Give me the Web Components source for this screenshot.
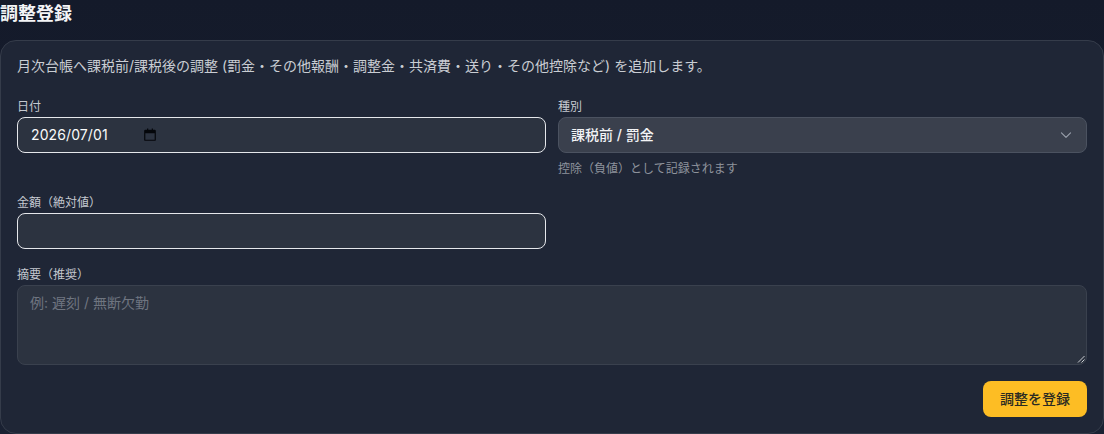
<!DOCTYPE html>
<html lang="ja">
<head>
<meta charset="utf-8">
<style>
html,body{margin:0;padding:0;height:434px;overflow:hidden;background:linear-gradient(180deg,#141a2a 0%,#1a2132 100%);color-scheme:dark}
body{font-family:Inter,"Noto Sans CJK JP",sans-serif;color:#fff}
</style>
</head>
<body>
<adjust-page>
  <span slot="title">調整登録</span>
  <adjust-card>
    <p-text>月次台帳へ課税前/課税後の調整 (罰金・その他報酬・調整金・共済費・送り・その他控除など) を追加します。</p-text>
    <form-grid>
      <form-field label="日付"><text-box focus date>2026/07/01</text-box></form-field>
      <form-field label="種別" hint="控除（負値）として記録されます"><select-box>課税前 / 罰金</select-box></form-field>
      <form-field label="金額（絶対値）"><text-box focus></text-box></form-field>
      <span></span>
      <form-field label="摘要（推奨）" wide><area-box>例: 遅刻 / 無断欠勤</area-box></form-field>
    </form-grid>
    <action-row><gold-button>調整を登録</gold-button></action-row>
  </adjust-card>
</adjust-page>
<script>
function def(name,css,html){
  customElements.define(name,class extends HTMLElement{
    connectedCallback(){
      if(this.shadowRoot)return;
      const r=this.attachShadow({mode:'open'});
      r.innerHTML='<style>'+css+'</style>'+(typeof html==='function'?html(this):html);
    }
  });
}
def('adjust-page',':host{display:flex;flex-direction:column;height:434px;box-sizing:border-box}h2{margin:0;height:40px;box-sizing:border-box;padding-top:1px;font-size:18px;line-height:26px;font-weight:700;color:#f3f4f6}',
 '<h2><slot name="title"></slot></h2><slot></slot>');
def('adjust-card',':host{display:block;flex:1;box-sizing:border-box;padding:15px 16px 16px;background:#1f2636;border:1px solid #353c4a;border-radius:16px}',
 '<slot></slot>');
def('p-text',':host{display:block;font-size:14px;line-height:20px;color:#c9cdd3;margin-bottom:23px}','<slot></slot>');
def('form-grid',':host{display:grid;grid-template-columns:1fr 1fr;column-gap:12px;row-gap:18px}','<slot></slot>');
def('form-field',':host{display:block;min-width:0}:host([wide]){grid-column:1 / -1}label{display:block;font-size:12px;line-height:16px;color:#c4c8cf;margin-bottom:2px}.hint{font-size:12px;line-height:16px;color:#8e939c;margin-top:8px}',
 h=>'<label>'+h.getAttribute('label')+'</label><slot></slot>'+(h.getAttribute('hint')?'<div class="hint">'+h.getAttribute('hint')+'</div>':''));
def('text-box',':host{display:flex;align-items:center;height:36px;box-sizing:border-box;padding:0 13px 1px;border:1px solid #374151;border-radius:8px;background:#2c3340;font-size:14px;letter-spacing:.1px;color:#f9fafb}:host([focus]){border-color:#e5e7eb}svg{margin-left:35px;flex:none}',
 h=>'<slot></slot>'+(h.hasAttribute('date')?'<svg width="14" height="14" viewBox="0 0 24 24" fill="#04060a"><path d="M7 1h2v2h6V1h2v2h3a2 2 0 0 1 2 2v15a2 2 0 0 1-2 2H4a2 2 0 0 1-2-2V5a2 2 0 0 1 2-2h3V1zM4 9v11h16V9H4z"/></svg>':''));
def('select-box',':host{display:flex;align-items:center;justify-content:space-between;height:36px;box-sizing:border-box;padding:0 13px 2px 12px;border:1px solid #4b5260;border-radius:8px;background:#3a404d;font-size:14px;font-weight:500;color:#f3f4f6}svg{margin-top:2px}',
 '<slot></slot><svg width="14" height="14" viewBox="0 0 20 20" fill="none" stroke="#9ca3af" stroke-width="1.5" stroke-linecap="round" stroke-linejoin="round"><path d="M3.5 7l6.5 6.5 6.5-6.5"/></svg>');
def('area-box',':host{display:block;position:relative;height:80px;box-sizing:border-box;padding:7px 12px;border:1px solid #3a414e;border-radius:8px;background:#2c3340;font-size:14px;line-height:20px;color:#6f7580}svg{position:absolute;right:1px;bottom:1px}',
 '<slot></slot><svg width="8" height="8" viewBox="0 0 8 8" stroke="#c9ccd1" stroke-width="1"><path d="M1 7.5L7.5 1M4.5 7.5L7.5 4.5"/></svg>');
def('action-row',':host{display:flex;justify-content:flex-end;margin-top:16px}','<slot></slot>');
def('gold-button',':host{display:flex;align-items:center;justify-content:center;height:36px;width:104px;box-sizing:border-box;padding-bottom:2px;border-radius:8px;background:#fdbd24;color:#2a2a22;font-size:14px;font-weight:500}','<slot></slot>');
</script>
</body>
</html>
